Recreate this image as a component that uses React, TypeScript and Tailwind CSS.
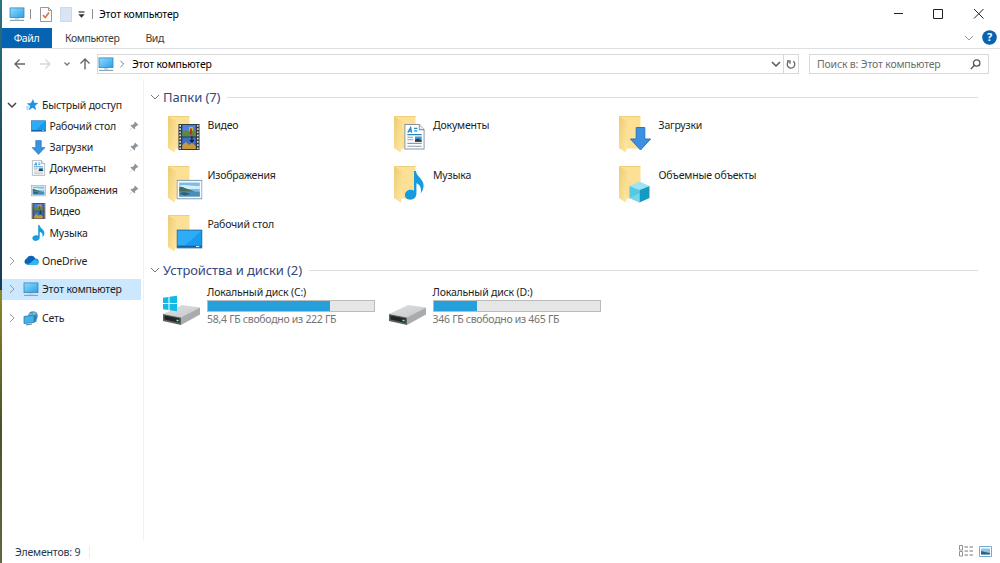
import type { ReactNode } from "react";

type FolderKind = "video" | "documents" | "downloads" | "pictures" | "music" | "objects" | "desktop";

interface QuickLink {
  label: string;
  kind: FolderKind;
  pinned: boolean;
}

interface Drive {
  label: string;
  info: string;
  used: number;
  system: boolean;
}

const QUICK_LINKS: QuickLink[] = [
  { label: "Рабочий стол", kind: "desktop", pinned: true },
  { label: "Загрузки", kind: "downloads", pinned: true },
  { label: "Документы", kind: "documents", pinned: true },
  { label: "Изображения", kind: "pictures", pinned: true },
  { label: "Видео", kind: "video", pinned: false },
  { label: "Музыка", kind: "music", pinned: false },
];

const FOLDERS: { label: string; kind: FolderKind }[] = [
  { label: "Видео", kind: "video" },
  { label: "Документы", kind: "documents" },
  { label: "Загрузки", kind: "downloads" },
  { label: "Изображения", kind: "pictures" },
  { label: "Музыка", kind: "music" },
  { label: "Объемные объекты", kind: "objects" },
  { label: "Рабочий стол", kind: "desktop" },
];

const DRIVES: Drive[] = [
  { label: "Локальный диск (C:)", info: "58,4 ГБ свободно из 222 ГБ", used: 73.5, system: true },
  { label: "Локальный диск (D:)", info: "346 ГБ свободно из 465 ГБ", used: 26, system: false },
];

/* ---------- icons ---------- */

const Chevron = ({ dir = "down", className = "" }: { dir?: "down" | "right"; className?: string }) => (
  <svg viewBox="0 0 10 10" className={`size-[10px] shrink-0 ${className}`} fill="none" stroke="currentColor">
    <path d={dir === "down" ? "M1 3l4 4 4-4" : "M3 1l4 4-4 4"} />
  </svg>
);

const ComputerIcon = () => (
  <svg viewBox="0 0 16 15" className="h-[15px] w-4 shrink-0">
    <defs>
      <linearGradient id="screen" x1="0" y1="0" x2="1" y2="1">
        <stop offset="0" stopColor="#8fdcff" />
        <stop offset="1" stopColor="#2a9fe6" />
      </linearGradient>
    </defs>
    <rect x="1" y=".9" width="14" height="9.7" fill="url(#screen)" stroke="#3b86b5" strokeWidth=".8" />
    <path d="M6 11h4v1.5H6z" fill="#c5d3dc" />
    <path d="M1 13.4h14" stroke="#8ba5b7" strokeWidth="1.2" />
  </svg>
);

/* Overlay glyphs share a 24x26 box so that they serve both folders and the tree. */
const glyphs: Record<FolderKind, ReactNode> = {
  video: (
    <>
      <rect x="1" width="22" height="26" fill="#343b40" />
      <path d="M2.8 1v24M21.2 1v24" stroke="#d8dde0" strokeWidth="1.7" strokeDasharray="1.7 1.5" />
      <rect x="5" y="1" width="14" height="11.3" fill="#4e83d9" />
      <rect x="5" y="13.5" width="14" height="11.5" fill="#3f6fc7" />
      <path d="M5 8l4-2 3 2 7-2v6.3H5z" fill="#5b8a3c" />
      <path d="M12 3h4v4h-4z" fill="#e6b32b" />
      <path d="M13 4.5h2v6h-2z" fill="#a33529" />
      <path d="M5 21l4-3 3 3 3-2 4 3v3H5z" fill="#c99a35" />
      <path d="M15 12v6m-2-2 2 2 2-2" stroke="#18232b" fill="none" strokeWidth="1.3" />
    </>
  ),
  documents: (
    <>
      <path d="M2 1h15l5 5v19H2z" fill="#fff" stroke="#8795a0" />
      <path d="M17 1v5h5" fill="#e9eff3" stroke="#8795a0" />
      <path d="m5 9 3-5 1 5M6 7.5h3M11.5 4.7H15M11.5 7.2H15M4.5 11h15" fill="none" stroke="#2388cb" strokeWidth="1.3" />
      <path d="M4.5 13.5h6M4.5 16h6M4.5 19.5h15M4.5 22.3h15" stroke="#8ba0af" />
      <path d="M12.5 12.8h7v5h-7z" fill="#5094bf" />
      <path d="M12.5 16l3-1.4 4 2v1.2h-7z" fill="#263e4c" />
    </>
  ),
  downloads: <path d="M7.5 2.5h9V14H22.5L12 25 1.5 14h6z" fill="#3a91e0" stroke="#2476bd" />,
  pictures: (
    <>
      <rect x=".5" y="5.5" width="23" height="17" fill="#f7fafc" stroke="#8ba2b2" />
      <rect x="2.5" y="7.5" width="19" height="13" fill="#79bbe9" />
      <path d="M2.5 10.5c6-2 11 1 19 0v3h-19z" fill="#d5edfa" />
      <path d="M2.5 11.5c4-.5 6 2 9 2.5l6 2h-15z" fill="#426e5a" />
      <path d="M2.5 16h19v4.5h-19z" fill="#4b8db5" />
      <path d="M2.5 17.5c4-2 7-1 10 .5l-5 1.5z" fill="#315f69" />
    </>
  ),
  music: (
    <path
      d="M11.5 0h2c.4 5 8 7 8 13 0 3-1.2 5-3 7 1-5-1-8-4.5-9v9c0 3.5-3 5.8-6.5 5.8-3.2 0-5.5-1.8-5.5-4.2 0-3 3-4.8 6.2-4.8 1.3 0 2.4.2 3.3.8z"
      fill="#159be0"
    />
  ),
  objects: (
    <>
      <path d="m12 3 10 4.5-10 4L2 7.5z" fill="#9ce4f3" />
      <path d="M2 7.5l10 4V24L2 19.5z" fill="#55c8e3" />
      <path d="M22 7.5l-10 4V24l10-4.5z" fill="#149bc4" />
      <path d="m2 19.5 10-5V24z" fill="#8adeed" opacity=".6" />
    </>
  ),
  desktop: (
    <>
      <rect x=".5" y="4.5" width="23" height="17" fill="#169bf0" stroke="#1a6da8" />
      <path d="M1 5h22L8 19H1z" fill="#39b4fb" opacity=".7" />
      <path d="M1 20.3h22" stroke="#155f94" strokeWidth="1.4" />
      <path d="M18 20.3h3" stroke="#d7efff" />
    </>
  ),
};

const TreeGlyph = ({ kind }: { kind: FolderKind }) => (
  <svg viewBox="0 0 24 26" className="h-4 w-[15px] shrink-0">
    {glyphs[kind]}
  </svg>
);

/* x, y, width, height of the overlay inside the 40px folder tile */
const OVERLAY: Record<FolderKind, [number, number, number, number]> = {
  video: [12.5, 10, 23, 26],
  documents: [12, 9.5, 23, 26.5],
  downloads: [13, 11, 23, 26],
  pictures: [11.5, 10.5, 26, 28],
  music: [12, 7, 23, 29],
  objects: [11.5, 14.5, 24, 26],
  desktop: [11.5, 12.5, 26, 27],
};

const FolderIcon = ({ kind }: { kind: FolderKind }) => {
  const [x, y, width, height] = OVERLAY[kind];
  return (
    <svg viewBox="0 0 40 42" className="h-[42px] w-10 shrink-0">
      <defs>
        <linearGradient id="flap" x1="0" y1="0" x2="1" y2="1">
          <stop offset="0" stopColor="#eecb70" />
          <stop offset="1" stopColor="#ffe8a5" />
        </linearGradient>
      </defs>
      <path d="M3 2.5h21.5v32H9L3 33z" fill="#fbe095" />
      <path d="M3 2.5l8 4.5v27l-1.5 4.5L3 34z" fill="url(#flap)" />
      <path d="M3 2.5h21.5" stroke="#efcf7b" />
      <svg x={x} y={y} width={width} height={height} viewBox="0 0 24 26" preserveAspectRatio="none">
        {glyphs[kind]}
      </svg>
    </svg>
  );
};

const DriveIcon = ({ system }: { system: boolean }) => (
  <svg viewBox="0 0 42 42" className="mt-0.5 h-[42px] w-[42px] shrink-0">
    <defs>
      <linearGradient id="lid" x1="0" y1="0" x2="1" y2="1">
        <stop offset="0" stopColor="#dfe0e1" />
        <stop offset="1" stopColor="#c5c7c9" />
      </linearGradient>
    </defs>
    <path d="M2 28l19-9 18 2.5-18 10z" fill="url(#lid)" />
    <path d="M39 21.5v7L20 39v-7.500z" fill="#a9acaf" />
    <path d="M2 28l18 3.5V39L2 35z" fill="#5b5f61" />
    <path d="M3.5 29.5l15 3v4.3l-15-3.3z" fill="#202527" />
    <path d="M15.5 34.3l2 .4" stroke="#8cf0c0" strokeWidth="1.4" />
    {system && (
      <path
        d="M2 11.8l5.5-.8v6H2zM8.500 10.8l7.500-1.100V17H8.500zM2 18h5.500v6L2 23.200zM8.500 18H16v7.300l-7.500-1.100z"
        fill="#14b9e6"
      />
    )}
  </svg>
);

const PinIcon = () => (
  <svg viewBox="0 0 10 10" className="size-[10px] shrink-0">
    <path
      d="M6 .5L9.500 4l-1 .5-.6-.1L6 6.300l.2 1.500-.7.700L3.600 6.600 1 9.300l-.5.2.200-.5 2.700-2.600L1.500 4.500l.7-.7 1.500.2 1.900-1.900L5.500 1.500z"
      fill="#8c959c"
    />
  </svg>
);

const StarIcon = () => (
  <svg viewBox="0 0 14 14" className="size-[14px] shrink-0">
    <path d="M8 1l1.300 3.700L13.300 5l-3.200 2.700 1 4.300-3.600-2.200L4 12.300l1-4.200L1.800 5.400l4.100-.5z" fill="#2492dc" />
    <path d="M1 9h3M1.500 11h2.500" stroke="#6bb8ea" strokeWidth=".9" />
  </svg>
);

const CloudIcon = () => (
  <svg viewBox="0 0 16 11" className="h-[11px] w-[15px] shrink-0">
    <path d="M4 10.300A3.600 3.600 0 013 3.400a5 5 0 019-.1 3.500 3.500 0 01.5 7z" fill="#1493df" />
    <path d="M3 3.400A5 5 0 0112 3.300L6 9 1 8.500a3.600 3.600 0 012-5.100z" fill="#0c62b8" />
    <path d="M4 10.300l7-5.500c4-.5 5.500 4.500 1.800 5.500z" fill="#32b7f3" />
  </svg>
);

const NetworkIcon = () => (
  <svg viewBox="0 0 16 16" className="size-4 shrink-0">
    <circle cx="10" cy="6" r="4.800" fill="#4795bd" />
    <path d="M6 4c3 1 5 0 7-1M10 1.500c2 3 1.500 6 0 9" stroke="#a5dcf5" strokeWidth=".8" fill="none" />
    <path d="M1 6.500l10-1.500v7.500L1 13.500z" fill="#45b1e8" stroke="#2a7db0" strokeWidth=".8" />
    <path d="M11 5l2.500 1v5.500l-2.500 1z" fill="#2c83ad" />
    <path d="M3 14.800l6-.8" stroke="#5b8aa7" strokeWidth="1.200" />
  </svg>
);

/* ---------- window chrome ---------- */

const TitleBar = () => (
  <div className="flex h-7 items-center">
    <div className="ml-[7px] flex items-center">
      <ComputerIcon />
    </div>
    <span className="ml-[5px] h-[10px] w-px bg-[#8e8e8e]" />
    <svg viewBox="0 0 12 15" className="ml-[9px] h-[15px] w-3" fill="none">
      <path d="M.5.5h8l3 3v11H.5z" fill="#fcfcfc" stroke="#98989a" />
      <path d="M8.500.5v3h3" stroke="#98989a" />
      <path d="M3 8l2.200 2.500L9 5.500" stroke="#d5723a" strokeWidth="1.500" />
    </svg>
    <svg viewBox="0 0 12 15" className="ml-2 h-[15px] w-3">
      <path d="M.5.5h11v14H.5z" fill="#d9e5f5" stroke="#cbd8ea" />
    </svg>
    <svg viewBox="0 0 7 8" className="ml-[6px] mt-px h-2 w-[7px]">
      <path d="M.5 1h6" stroke="#333" strokeWidth="1.200" />
      <path d="M.3 3.300h6.400L3.500 6.700z" fill="#333" />
    </svg>
    <span className="ml-[7px] h-[10px] w-px bg-[#8e8e8e]" />
    <span className="ml-[6px] text-black">Этот компьютер</span>
    <svg viewBox="0 0 96 12" className="ml-auto mr-[14px] -mt-[3px] h-3 w-24" fill="none" stroke="#222">
      <path d="M4 6.500h9" />
      <path d="M43.500 2.500h9v9h-9zM84 2l9.500 9.500M93.500 2L84 11.500" />
    </svg>
  </div>
);

const RibbonTabs = () => (
  <div className="flex h-[21px] items-stretch border-b border-[#dfe0e1] text-[#3c3c3c]">
    <div className="flex w-[50px] items-center justify-center bg-[#0563b1] pr-px tracking-[-0.35px] text-white">Файл</div>
    <div className="ml-[13px] flex items-center tracking-[-0.4px]">Компьютер</div>
    <div className="ml-[26px] flex items-center tracking-[-0.35px]">Вид</div>
    <div className="ml-auto mr-[3px] flex items-center gap-2">
      <Chevron className="text-[#9a9a9a]" />
      <svg viewBox="0 0 15 15" className="-mt-0.5 size-[15px]">
        <circle cx="7.500" cy="7.500" r="7.300" fill="#0a63b0" />
        <text x="7.500" y="11.300" textAnchor="middle" fill="#fff" className="text-[11px] font-bold">?</text>
      </svg>
    </div>
  </div>
);

const AddressBar = () => (
  <div className="flex h-[30px] items-center">
    <svg viewBox="0 0 80 14" className="ml-[11px] h-[14px] w-20 shrink-0" fill="none">
      <path d="M12 7H2m4.500-4.500L2 7l4.500 4.500" stroke="#666" strokeWidth="1.400" />
      <path d="M27 7h10m-4.500-4.500L37 7l-4.500 4.500" stroke="#d7d7d7" strokeWidth="1.300" />
      <path d="M51.500 5.500l2.500 2.500 2.500-2.500" stroke="#777" strokeWidth="1.300" />
      <path d="M72 12.500V2m-4.500 4.500L72 2l4.500 4.500" stroke="#666" strokeWidth="1.400" />
    </svg>
    <div className="ml-1 flex h-5 w-[702px] items-center border border-[#d9d9d9]">
      <ComputerIcon />
      <Chevron dir="right" className="ml-1 !size-2 text-[#555]" />
      <span className="ml-[6px] text-black">Этот компьютер</span>
      <Chevron className="ml-auto mr-0.5 stroke-[1.5] text-[#555]" />
      <div className="flex h-full w-[15px] items-center justify-center border-l border-[#d9d9d9]">
        <svg viewBox="0 0 10 10" className="size-[10px]" fill="none" stroke="#666" strokeWidth="1.300">
          <path d="M7.300 2.300A3.800 3.800 0 112.500 2.500M1 1.800h3v3" />
        </svg>
      </div>
    </div>
    <div className="ml-[10px] flex h-5 w-[180px] items-center border border-[#d9d9d9] pl-[7px] pr-[7px] text-[#6d6d6d]">
      <span>Поиск в: Этот компьютер</span>
      <svg viewBox="0 0 11 11" className="ml-auto size-[11px]" fill="none" stroke="#555" strokeWidth="1.300">
        <circle cx="6.700" cy="4" r="3.200" />
        <path d="M4.500 6.300L.8 10" />
      </svg>
    </div>
  </div>
);

/* ---------- navigation pane ---------- */

const RootRow = ({ label, icon, selected = false }: { label: string; icon: ReactNode; selected?: boolean }) => (
  <div className={`flex h-[21px] w-[139px] items-center ${selected ? "bg-[#cce8ff]" : ""}`}>
    <Chevron dir="right" className="ml-[5px] text-[#999]" />
    <div className="ml-[6px] flex w-4 justify-center">{icon}</div>
    <span className="ml-[3px]">{label}</span>
  </div>
);

const NavigationPane = () => (
  <nav className="w-[142px] shrink-0 border-r border-[#f1f1f1] pt-[15px]">
    <div className="flex h-[21px] items-center">
      <Chevron className="ml-[5px] stroke-[1.5] text-[#444]" />
      <div className="ml-[8px]">
        <StarIcon />
      </div>
      <span className="ml-[3px]">Быстрый доступ</span>
    </div>
    {QUICK_LINKS.map((link) => (
      <div key={link.label} className="flex h-[21.4px] items-center pl-[29px]">
        <TreeGlyph kind={link.kind} />
        <span className="ml-[3.5px]">{link.label}</span>
        {link.pinned && (
          <div className="ml-auto mr-1">
            <PinIcon />
          </div>
        )}
      </div>
    ))}
    <div className="mt-[7px] flex flex-col gap-[7.5px]">
      <RootRow label="OneDrive" icon={<CloudIcon />} />
      <RootRow label="Этот компьютер" icon={<ComputerIcon />} selected />
      <RootRow label="Сеть" icon={<NetworkIcon />} />
    </div>
  </nav>
);

/* ---------- content ---------- */

const GroupHeader = ({ title }: { title: string }) => (
  <div className="flex h-5 items-center">
    <Chevron className="text-[#777]" />
    <h2 className="ml-[3px] whitespace-nowrap text-[13px] tracking-[-0.1px] text-[#33477d]">{title}</h2>
    <span className="ml-[7px] h-px flex-1 bg-[#dedede]" />
  </div>
);

const DriveTile = ({ drive }: { drive: Drive }) => (
  <div className="flex">
    <DriveIcon system={drive.system} />
    <div className="ml-1 mt-px w-[168px]">
      <div className="h-[14px] leading-[14px]">{drive.label}</div>
      <div className="mt-px h-3 border border-[#bcbcbc] bg-[#e6e6e6]">
        <div className="h-full bg-[#26a0da]" style={{ width: `${drive.used}%` }} />
      </div>
      <div className="h-[14px] leading-[14px] tracking-[-0.28px] text-[#747474]">{drive.info}</div>
    </div>
  </div>
);

const Content = () => (
  <main className="min-w-0 flex-1 pl-[6px] pr-[22px] pt-2">
    <GroupHeader title="Папки (7)" />
    <div className="ml-[15px] mt-[7px] grid h-[146px] grid-cols-[repeat(3,225.5px)] auto-rows-[49.7px]">
      {FOLDERS.map((folder) => (
        <div key={folder.label} className="flex">
          <FolderIcon kind={folder.kind} />
          <span className="ml-[2.5px] mt-1">{folder.label}</span>
        </div>
      ))}
    </div>
    <GroupHeader title="Устройства и диски (2)" />
    <div className="ml-[11px] mt-1 grid grid-cols-[repeat(2,225.5px)]">
      {DRIVES.map((drive) => (
        <DriveTile key={drive.label} drive={drive} />
      ))}
    </div>
  </main>
);

const StatusBar = () => (
  <footer className="flex h-[22px] items-center pl-[13px] pr-2 text-[#26364f]">
    <span>Элементов: 9</span>
    <span className="ml-[9px] h-3 w-px bg-[#eee]" />
    <svg viewBox="0 0 14 12" className="-mt-0.5 ml-auto h-3 w-[14px]" fill="none" stroke="#777">
      <path d="M.5.5h3v4.500h-3zM.5 6.500h3V11h-3z" strokeWidth=".8" />
      <path d="M5.500 2H9M10.500 2H14M5.500 6H9M10.500 6H14M5.500 10H9M10.500 10H14" />
    </svg>
    <svg viewBox="0 0 13 11" className="-mt-0.5 ml-[6px] h-[11px] w-[13px]">
      <path d="M.5.5h12v10H.5z" fill="#fff" stroke="#76a9cb" />
      <path d="M2 2.500h9v6H2z" fill="#8bc5e8" />
      <path d="M2 5l4 1 5 1v1.500H2z" fill="#2e6280" />
    </svg>
  </footer>
);

const App = () => (
  <div className="flex h-[563px] w-[1000px] overflow-hidden bg-white font-['Noto_Sans',sans-serif] text-[10.5px] leading-[14px] tracking-[-0.18px] text-[#1d1d1d]">
    {/* sliver of desktop wallpaper beside the window */}
    <div className="flex w-0.5 shrink-0 flex-col">
      <div className="h-[290px] bg-linear-to-b from-[#2c7484] via-[#1d4d68] to-[#173d54]" />
      <div className="flex-1 bg-linear-to-b from-[#8b8a2c] via-[#4d5226] to-[#5f6b3c]" />
    </div>
    <div className="flex min-w-0 flex-1 flex-col whitespace-nowrap">
      <TitleBar />
      <RibbonTabs />
      <AddressBar />
      <div className="flex min-h-0 flex-1">
        <NavigationPane />
        <Content />
      </div>
      <StatusBar />
    </div>
  </div>
);

export default App;
